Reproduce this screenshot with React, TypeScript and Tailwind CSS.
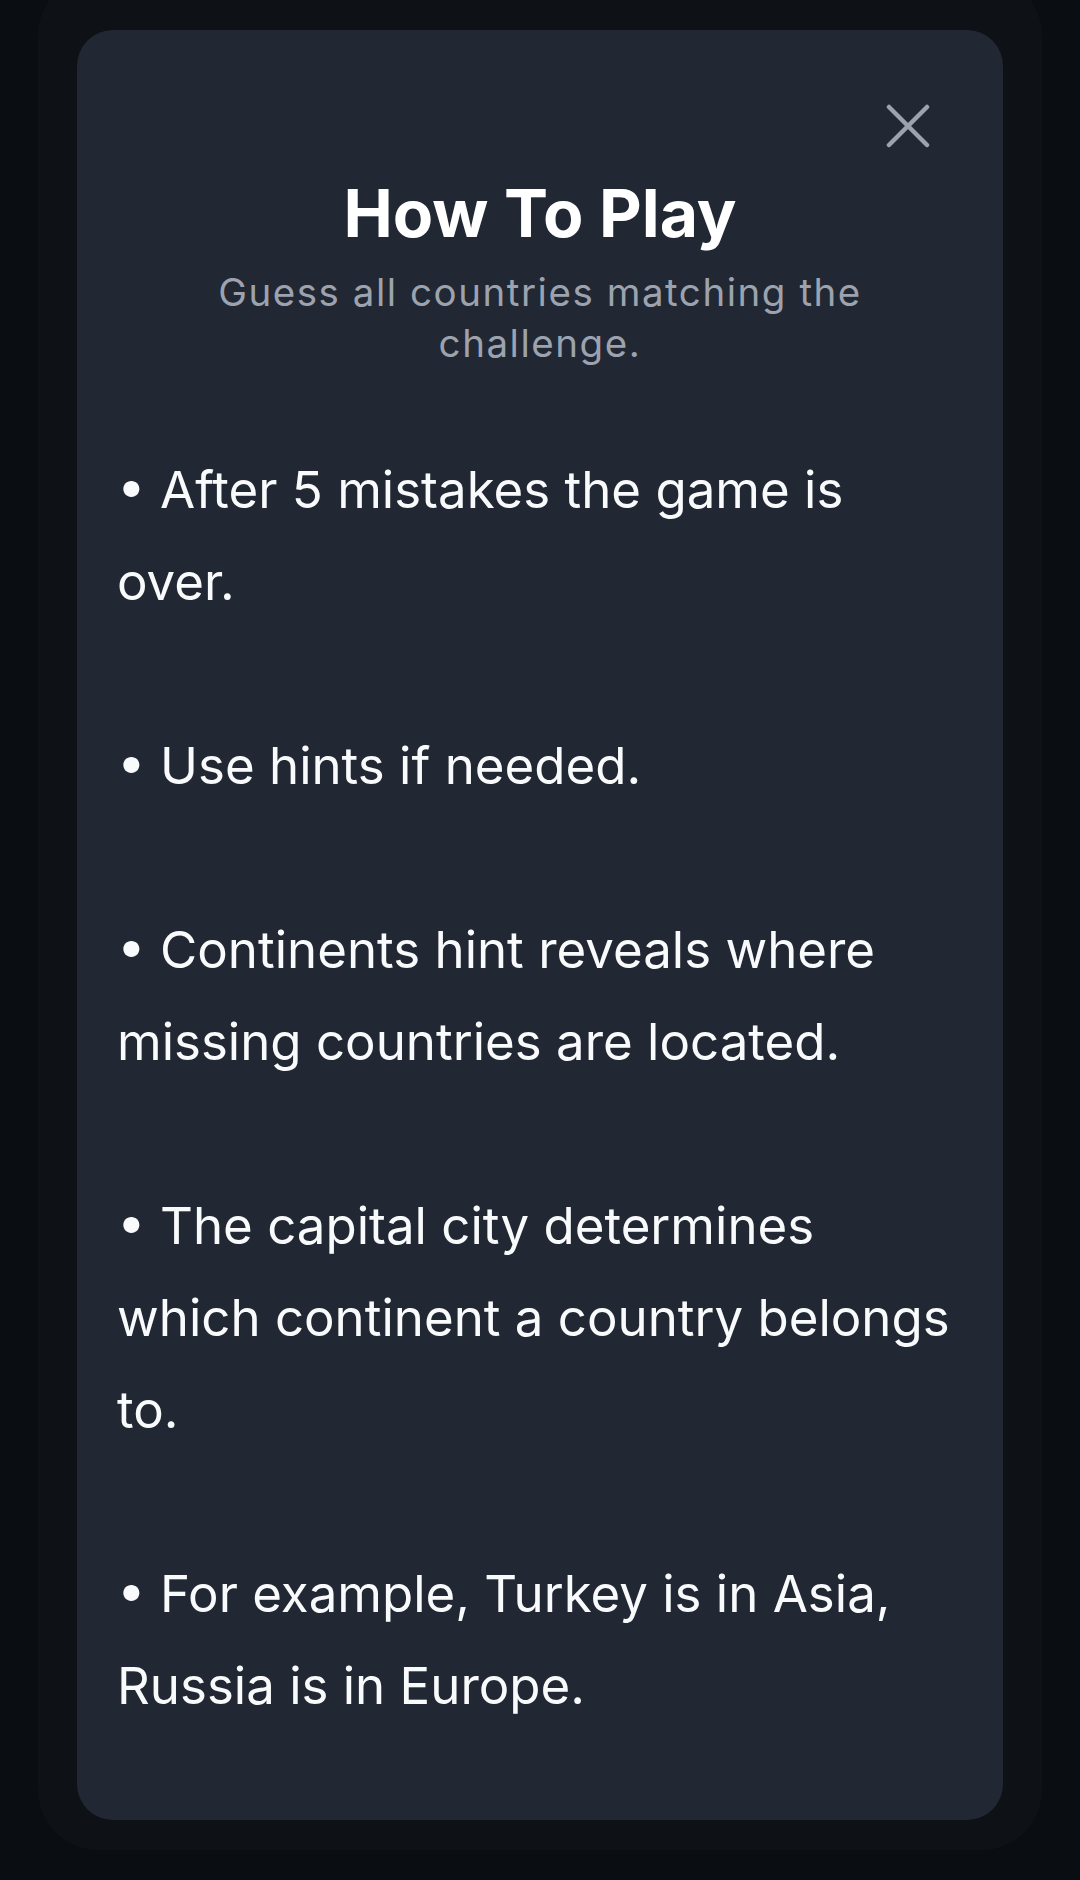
const rules = [
  'After 5 mistakes the game is over.',
  'Use hints if needed.',
  'Continents hint reveals where missing countries are located.',
  'The capital city determines which continent a country belongs to.',
  'For example, Turkey is in Asia, Russia is in Europe.',
];

function CloseIcon() {
  return (
    <svg width="44" height="44" viewBox="0 0 44 44" fill="none" stroke="#9ca3af" strokeWidth="4.5" strokeLinecap="round">
      <path d="M3 3L41 41" />
      <path d="M41 3L3 41" />
    </svg>
  );
}

export default function App() {
  return (
    <div className="h-[1880px] overflow-hidden bg-[#0a0d11] font-['Inter','Noto_Sans',sans-serif]">
      <div className="mx-[38px] -mt-[25px] rounded-[60px] bg-[#0e1217] px-[39px] pt-[55px] pb-[30px]">
        <div className="rounded-[36px] bg-[#212833] px-[40px] pt-[74px] pb-[88px]">
          <div className="flex justify-end">
            <button type="button" aria-label="Close" className="mr-[33px] h-[44px] w-[44px]">
              <CloseIcon />
            </button>
          </div>

          <h2 className="mt-[26px] text-center text-[66px] leading-[79px] font-bold text-white">
            How To Play
          </h2>
          <p className="mx-auto mt-[14px] max-w-[700px] text-center text-[38.5px] leading-[51px] tracking-[0.04em] text-[#9ca3af]">
            Guess all countries matching the challenge.
          </p>

          <div className="mt-[75px] space-y-[92px] text-[51px] leading-[92px] text-[#f9fafb]">
            {rules.map((rule) => (
              <p key={rule}>• {rule}</p>
            ))}
          </div>
        </div>
      </div>
    </div>
  );
}
